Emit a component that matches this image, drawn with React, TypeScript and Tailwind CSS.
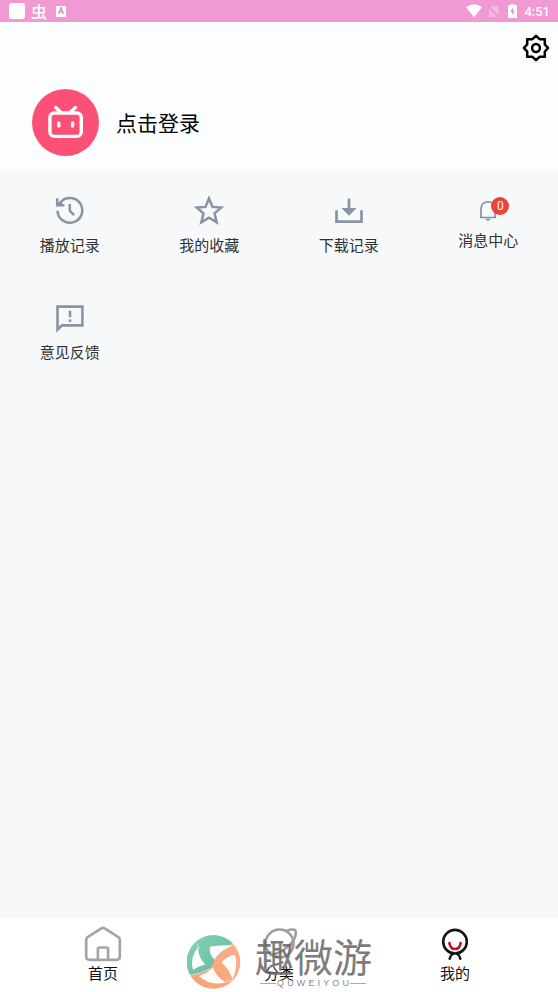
import type { ReactNode } from "react";

function TvAvatar() {
  return (
    <svg width="68" height="68" viewBox="0 0 68 68" fill="none" className="shrink-0">
      <circle cx="34.5" cy="33.5" r="33.5" fill="#fd5076" />
      <g stroke="white" strokeWidth="3.4" strokeLinecap="round">
        <rect x="18.9" y="24" width="31.4" height="23.4" rx="4.5" />
        <path d="M24.8 18.6l5 4.6M44.4 18.6l-5 4.6" />
        <path d="M27.8 33.9v3.2M41.6 33.9v3.2" />
      </g>
    </svg>
  );
}

function GearIcon() {
  return (
    <svg width="28" height="28" viewBox="0 0 28 28" fill="none" stroke="black" strokeWidth="2.5">
      <path
        d="M14 1.9L17.6 5.2H22.8V10.4L26.1 14L22.8 17.6V22.8H17.6L14 26.1L10.4 22.8H5.2V17.6L1.9 14L5.2 10.4V5.2H10.4Z"
        strokeLinejoin="round"
      />
      <circle cx="14" cy="14" r="3.9" />
    </svg>
  );
}

function HistoryIcon() {
  return (
    <svg width="30" height="30" viewBox="0 0 30 30" fill="none" stroke="#8595a5" strokeWidth="2.5">
      <path d="M2.5 14.7A12.4 12.4 0 1 0 5.2 6.6L3 9" />
      <path d="M2.2 2.3V9.3H9.3" />
      <path d="M2.2 9.3L7 4.7V9.3Z" fill="#8595a5" stroke="none" />
      <path d="M14.8 8v6.8l4.4 4.3" />
    </svg>
  );
}

function StarIcon() {
  return (
    <svg width="30" height="30" viewBox="0 0 30 30" fill="none" stroke="#8595a5" strokeWidth="2.5">
      <path d="M15 2.4L18.5 10.9L27.3 11.5L20.5 17.4L22.7 26.4L15 21.6L7.3 26.4L9.5 17.4L2.7 11.5L11.5 10.9Z" />
    </svg>
  );
}

function DownloadIcon() {
  return (
    <svg width="30" height="30" viewBox="0 0 30 30" fill="none" stroke="#8595a5" strokeWidth="2.7">
      <path d="M2.5 14.2V25.6H27.5V14.2" />
      <path d="M15 2.5v10" />
      <path d="M7.5 12h15L15 19.8z" fill="#8595a5" stroke="none" />
    </svg>
  );
}

function BellIcon() {
  return (
    <svg width="20" height="22" viewBox="0 0 20 22" fill="none" stroke="#8595a5" strokeWidth="1.7">
      <path d="M1.8 17.5H18.2M3 17.5V8.5C3 4.2 6 1.9 10 1.9S17 4.2 17 8.5V17.5" />
      <path d="M7 18.7h6L10 21.2z" fill="#8595a5" stroke="none" />
    </svg>
  );
}

function FeedbackIcon() {
  return (
    <svg width="30" height="30" viewBox="0 0 30 30" fill="none" stroke="#8595a5" strokeWidth="2.6">
      <path d="M2.5 3.6H27.4V22.4H7L2.5 26.7Z" />
      <path d="M15 7.8v6.5M15 16.5v2.5" />
    </svg>
  );
}

function HomeIcon() {
  return (
    <svg width="38" height="36" viewBox="0 0 38 36" fill="none" stroke="#a5a5a5" strokeWidth="2.7">
      <path
        d="M17 2.6L3.6 11.2Q2.2 12.2 2.2 14V30.5Q2.2 33.8 5.5 33.8H32.5Q35.8 33.8 35.8 30.5V14Q35.8 12.2 34.4 11.2L21 2.6Q19 1.3 17 2.6Z"
        strokeLinejoin="round"
      />
      <path d="M13.9 33.5V23Q13.9 21.5 15.4 21.5H22.6Q24.1 21.5 24.1 23V33.5" />
    </svg>
  );
}

function PlanetIcon() {
  return (
    <svg width="38" height="36" viewBox="0 0 38 36" fill="none" stroke="#9e9e9e" strokeWidth="2.6">
      <circle cx="19.5" cy="17.5" r="14" />
      <path d="M26 5Q34.5 2.2 35.7 5Q36.7 12.5 28.5 20Q19 28.5 9.5 29" />
    </svg>
  );
}

function ProfileIcon() {
  return (
    <svg width="38" height="36" viewBox="0 0 38 36" fill="none" strokeWidth="2.6" strokeLinecap="round">
      <circle cx="19" cy="15.7" r="11.8" stroke="#151515" />
      <path d="M13.4 17C14.6 25 23.4 25 24.6 17" stroke="#c41230" />
      <path d="M16.7 28Q14 29.7 13.7 32.7M21.3 28Q24 29.7 24.3 32.7" stroke="#151515" />
    </svg>
  );
}

function SwirlLogo() {
  return (
    <svg width="54" height="54" viewBox="0 0 54 54" fill="none" className="shrink-0">
      <defs>
        <linearGradient id="mint" x1="0" y1="0" x2="1" y2="1">
          <stop offset="0" stopColor="#83d5b7" />
          <stop offset="1" stopColor="#66b598" />
        </linearGradient>
        <linearGradient id="peach" x1="1" y1="0" x2="0" y2="1">
          <stop offset="0" stopColor="#ffb189" />
          <stop offset="1" stopColor="#fa9f74" />
        </linearGradient>
      </defs>
      <circle cx="26.5" cy="27" r="26.7" fill="url(#peach)" />
      <path
        d="M3.3 40.2A26.7 26.7 0 0 1 45.4 8.1L41 12L27 24Q27 29.5 23 33.5Q14 39.5 3.3 40.2Z"
        fill="url(#mint)"
      />
      {/* openings between the four arms */}
      <g fill="white">
        <path d="M23 11.8Q33 9.5 45.6 10.6Q34 15 27.2 24.6Q21.5 18.5 23 11.8Z" />
        <path d="M11 12.5Q11.5 23.5 18.5 29.5Q11 31.2 6 35Q2.5 22 11 12.5Z" />
        <path d="M12 41Q20.5 38.5 25.8 32.5Q29 41.5 38.5 47.4Q23 51.5 12 41Z" />
        <path d="M34.5 27.5Q39.5 21.5 48 19.8Q51.5 31 45.5 44Q42 33.5 34.5 27.5Z" />
      </g>
      <path
        d="M9.8 8.5L12.5 14M3.3 40.2Q14 39.5 23 33.5M38.5 46.8L46 45"
        stroke="white"
        strokeOpacity="0.8"
        strokeWidth="0.7"
      />
    </svg>
  );
}

const menuItems = [
  { label: "播放记录", icon: <HistoryIcon /> },
  { label: "我的收藏", icon: <StarIcon /> },
  { label: "下载记录", icon: <DownloadIcon /> },
  { label: "消息中心", icon: <BellIcon />, badge: 0 },
  { label: "意见反馈", icon: <FeedbackIcon /> },
];

const tabs = [
  { label: "首页", icon: <HomeIcon /> },
  { label: "分类", icon: <PlanetIcon /> },
  { label: "我的", icon: <ProfileIcon /> },
];

function StatusBar() {
  return (
    <div className="flex h-[22px] shrink-0 items-center justify-between bg-[#f099d2] pl-[9px] pr-2 text-white">
      <div className="flex items-center">
        <span className="h-4 w-4 rounded-[3px] bg-white" />
        <span className="ml-[6px] text-base leading-[22px] font-medium">虫</span>
        <span className="ml-[9px] flex h-[11px] w-[10px] items-center justify-center rounded-[1px] bg-white font-['Roboto',sans-serif] text-[9px] font-bold leading-none text-[#d58abc]">
          A
        </span>
      </div>
      <div className="flex items-center">
        <svg width="16" height="14" viewBox="0 0 16 14" fill="white">
          <path d="M0 3.2Q8 -2.6 16 3.2L8 13.2Z" />
        </svg>
        <svg width="11" height="13" viewBox="0 0 11 13" className="ml-[6px]">
          <path d="M3 1H10.5V12H1V3.5Z" fill="#f5b9e0" />
          <path d="M0 1L11 12.5" stroke="#e98fca" strokeWidth="1.3" />
        </svg>
        <svg width="9" height="14" viewBox="0 0 9 14" className="ml-[9px]">
          <path d="M2.7 0H6.3V1.3H9V14H0V1.3H2.7Z" fill="white" />
          <path d="M5 3.3L2.3 7.8H4.2V11.3L6.9 6.8H5Z" fill="#e58fc7" />
        </svg>
        <span className="ml-[7px] pt-px font-['Roboto',sans-serif] text-[13px] font-medium leading-[21px]">
          4:51
        </span>
      </div>
    </div>
  );
}

function MenuItem({ label, icon, badge }: { label: string; icon: ReactNode; badge?: number }) {
  const hasBadge = badge !== undefined;
  return (
    <div className="flex h-[107px] flex-col items-center pt-[25px]">
      <div className={`relative flex justify-center ${hasBadge ? "h-[33px] pt-1" : "h-[38px]"}`}>
        {icon}
        {hasBadge && (
          <span className="absolute top-px left-[13px] flex h-[18px] w-[18px] items-center justify-center rounded-full bg-[#ed4138] font-['Roboto',sans-serif] text-xs text-white">
            {badge}
          </span>
        )}
      </div>
      <span className="text-[15px] leading-[22px] text-[#303133]">{label}</span>
    </div>
  );
}

export default function App() {
  return (
    <div className="flex h-[992px] w-[558px] flex-col overflow-hidden bg-[#f6f8fa] font-['Noto_Sans_CJK_SC',sans-serif]">
      <StatusBar />

      {/* Account */}
      <header className="h-[149px] shrink-0 bg-[#fcfdff]">
        <div className="flex justify-end pt-3 pr-2">
          <GearIcon />
        </div>
        <div className="mt-[27px] flex items-center pl-[31px]">
          <TvAvatar />
          <span className="ml-[17px] pb-[3px] text-[21px] leading-8 text-black">点击登录</span>
        </div>
      </header>

      <main className="grid flex-1 grid-cols-4 content-start">
        {menuItems.map((item) => (
          <MenuItem key={item.label} {...item} />
        ))}
      </main>

      {/* Bottom tabs */}
      <nav className="relative flex h-[74px] shrink-0 bg-white px-[15px]">
        {tabs.map((tab) => (
          <div key={tab.label} className="flex flex-1 flex-col items-center pt-2">
            {tab.icon}
            <span className="text-[15px] leading-[22px] text-[#111]">{tab.label}</span>
          </div>
        ))}

        {/* Brand stamp lies over the middle tab */}
        <div className="pointer-events-none absolute top-[17px] left-[187px] flex text-[#666]">
          <SwirlLogo />
          <div className="ml-[14px] w-[118px]">
            <div className="text-[39px] leading-[41px] opacity-85">趣微游</div>
            <div className="flex items-center pt-px font-['Liberation_Sans',sans-serif] text-[9px] leading-[12px] text-[#888]">
              <span className="ml-[5px] h-px w-[16px] bg-[#aaa]" />
              <span className="mx-[1px] flex w-[72px] justify-between">
                {"QUWEIYOU".split("").map((ch, i) => (
                  <span key={i}>{ch}</span>
                ))}
              </span>
              <span className="h-px w-[16px] bg-[#aaa]" />
            </div>
          </div>
        </div>
      </nav>
    </div>
  );
}
